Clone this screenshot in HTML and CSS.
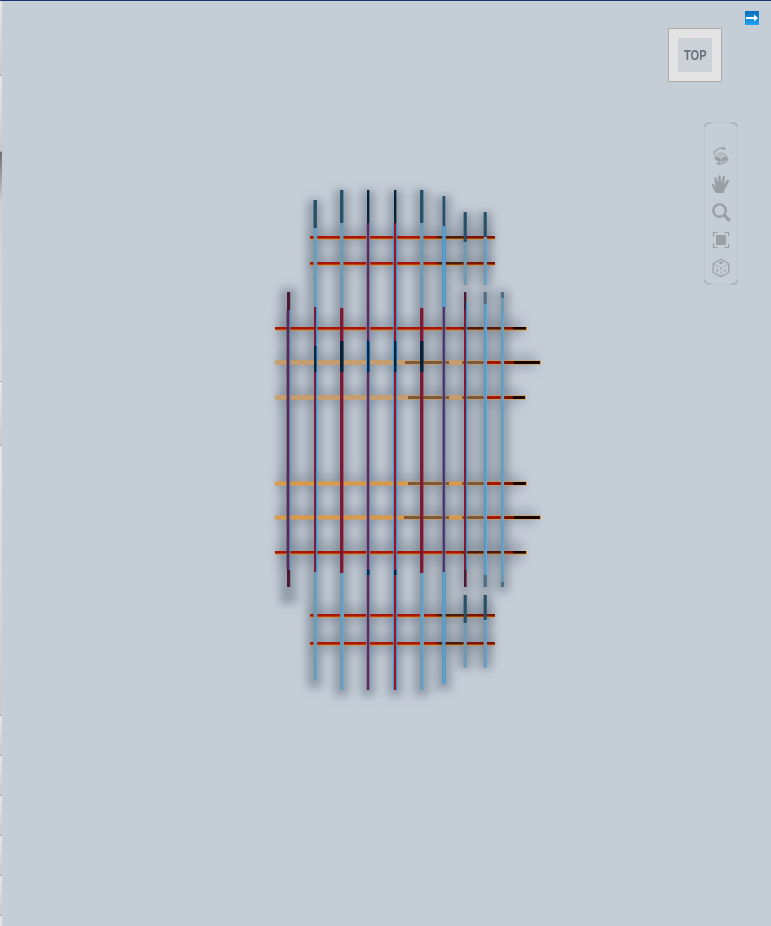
FILE: index.html
```html
<!DOCTYPE html>
<html lang="en">
<head>
<meta charset="utf-8">
<title>3D grid view</title>
<link rel="stylesheet" href="styles.css">
</head>
<body>
<main class="viewer">
  <div class="top-line"></div>
  <div class="rail">
    <i class="seg s75"></i><i class="seg s75"></i><i class="seg s230 dim"></i><i class="seg s65"></i><i class="seg s270"></i>
    <i class="seg s40"></i><i class="seg s40"></i><i class="seg s40"></i><i class="seg s40"></i><i class="seg s40"></i><i class="seg s45"></i>
  </div>

  <svg class="scene" viewBox="0 0 771 926" width="771" height="926" aria-hidden="true">
    <defs>
      <filter id="soft" x="-30%" y="-30%" width="160%" height="160%"><feGaussianBlur stdDeviation="4.6"/></filter>
      <filter id="softer" x="-30%" y="-30%" width="160%" height="160%"><feGaussianBlur stdDeviation="5.5"/></filter>
    </defs>

    <g class="shadow" filter="url(#soft)">
      <rect x="280" y="288" width="17" height="316"/>
      <rect x="307" y="200" width="15" height="488"/>
      <rect x="334" y="190" width="15" height="506"/>
      <rect x="361" y="190" width="14" height="506"/>
      <rect x="388" y="190" width="14" height="506"/>
      <rect x="414" y="190" width="15" height="506"/>
      <rect x="436" y="196" width="15" height="494"/>
      <rect x="458" y="212" width="14" height="74"/>
      <rect x="458" y="290" width="14" height="302"/>
      <rect x="458" y="595" width="14" height="74"/>
      <rect x="478" y="212" width="14" height="74"/>
      <rect x="478" y="290" width="14" height="302"/>
      <rect x="478" y="595" width="14" height="74"/>
      <rect x="496" y="290" width="13" height="302"/>
    </g>
    <g class="shadow faint" filter="url(#softer)">
      <rect x="312" y="229" width="180" height="16"/>
      <rect x="312" y="255" width="180" height="14"/>
      <rect x="278" y="319" width="245" height="18"/>
      <rect x="278" y="354" width="258" height="15"/>
      <rect x="278" y="389" width="245" height="15"/>
      <rect x="278" y="475" width="245" height="15"/>
      <rect x="278" y="509" width="258" height="15"/>
      <rect x="278" y="541" width="245" height="22"/>
      <rect x="312" y="606" width="180" height="18"/>
      <rect x="312" y="634" width="180" height="18"/>
    </g>

    <g class="beams-h">
      <g class="row-red">
        <rect class="fringe" x="310" y="236" width="185" height="3.4"/><rect class="red" x="310" y="236" width="127" height="2.6"/><rect class="brown" x="437" y="236" width="28" height="2.6"/><rect class="maroon" x="465" y="236" width="30" height="2.6"/>
        <rect class="fringe" x="310" y="262" width="185" height="3.4"/><rect class="red" x="310" y="262" width="127" height="2.6"/><rect class="brown" x="437" y="262" width="28" height="2.6"/><rect class="maroon" x="465" y="262" width="30" height="2.6"/>
        <rect class="fringe" x="275" y="327" width="252" height="3.4"/><rect class="red" x="275" y="327" width="187" height="2.6"/><rect class="brown" x="462" y="327" width="22" height="2.6"/><rect class="brown" x="486" y="327" width="15" height="2.6"/><rect class="maroon" x="504" y="327" width="9" height="2.6"/><rect class="black" x="513" y="327" width="13" height="2.6"/>
        <rect class="fringe" x="275" y="551" width="252" height="3.4"/><rect class="red" x="275" y="551" width="187" height="2.6"/><rect class="brown" x="462" y="551" width="22" height="2.6"/><rect class="brown" x="486" y="551" width="15" height="2.6"/><rect class="maroon" x="504" y="551" width="9" height="2.6"/><rect class="black" x="513" y="551" width="13" height="2.6"/>
        <rect class="fringe" x="310" y="614" width="185" height="3.4"/><rect class="red" x="310" y="614" width="127" height="2.6"/><rect class="brown" x="437" y="614" width="28" height="2.6"/><rect class="maroon" x="465" y="614" width="30" height="2.6"/>
        <rect class="fringe" x="310" y="642" width="185" height="3.4"/><rect class="red" x="310" y="642" width="127" height="2.6"/><rect class="brown" x="437" y="642" width="28" height="2.6"/><rect class="maroon" x="465" y="642" width="30" height="2.6"/>
      </g>
      <g class="row-tan">
        <rect class="edge" x="275" y="360.5" width="266" height="4"/><rect class="tan" x="275" y="361" width="130" height="3"/><rect class="umber" x="405" y="361" width="44" height="3"/><rect class="tan" x="449" y="361" width="13" height="3"/><rect class="umber" x="462" y="361" width="22" height="3"/><rect class="red" x="486" y="361" width="15" height="3"/><rect class="maroon" x="504" y="361" width="10" height="3"/><rect class="black" x="514" y="361" width="26" height="3"/>
        <rect class="edge" x="275" y="395.5" width="251" height="4"/><rect class="tan" x="275" y="396" width="133" height="3"/><rect class="umber" x="408" y="396" width="41" height="3"/><rect class="tan" x="449" y="396" width="13" height="3"/><rect class="umber" x="462" y="396" width="22" height="3"/><rect class="red" x="486" y="396" width="15" height="3"/><rect class="maroon" x="504" y="396" width="9" height="3"/><rect class="black" x="513" y="396" width="12" height="3"/>
      </g>
      <g class="row-gold">
        <rect class="edge" x="275" y="481.5" width="252" height="4"/><rect class="gold" x="275" y="482" width="133" height="3"/><rect class="umber" x="408" y="482" width="41" height="3"/><rect class="gold" x="449" y="482" width="13" height="3"/><rect class="umber" x="462" y="482" width="22" height="3"/><rect class="red" x="486" y="482" width="15" height="3"/><rect class="maroon" x="504" y="482" width="9" height="3"/><rect class="black" x="513" y="482" width="13" height="3"/>
        <rect class="edge" x="275" y="515.5" width="266" height="4"/><rect class="gold" x="275" y="516" width="129" height="3"/><rect class="umber" x="404" y="516" width="45" height="3"/><rect class="gold" x="449" y="516" width="13" height="3"/><rect class="umber" x="462" y="516" width="22" height="3"/><rect class="red" x="486" y="516" width="15" height="3"/><rect class="maroon" x="504" y="516" width="10" height="3"/><rect class="black" x="514" y="516" width="26" height="3"/>
      </g>
    </g>

    <g class="beams-v">
      <!-- x 287 -->
      <rect class="plum" x="287" y="292" width="3.2" height="18"/><rect class="crimson" x="287" y="310" width="2.6" height="277"/><rect class="blue" x="289.4" y="310" width="1" height="260"/><rect class="navy-edge" x="286.6" y="310" width=".8" height="260"/><rect class="plum" x="287" y="570" width="3.2" height="17"/>
      <!-- x 314 -->
      <rect class="teal" x="313.5" y="200" width="3.4" height="28"/><rect class="steel" x="313.5" y="228" width="3.4" height="79"/><rect class="sky" x="316.4" y="228" width=".8" height="79"/>
      <rect class="crimson" x="314" y="307" width="2.4" height="265"/><rect class="blue" x="316" y="307" width="1.2" height="265"/><rect class="navy" x="314" y="346" width="2.4" height="26"/>
      <rect class="steel" x="313.5" y="572" width="3.4" height="108"/><rect class="sky" x="316.4" y="572" width=".8" height="108"/>
      <!-- x 340 -->
      <rect class="teal" x="340" y="190" width="3.4" height="33"/><rect class="steel" x="340" y="223" width="3.4" height="85"/>
      <rect class="crimson" x="340" y="308" width="3.4" height="265"/><rect class="navy" x="340" y="341" width="3.4" height="31"/>
      <rect class="steel" x="340" y="573" width="3.4" height="117"/><rect class="sky" x="343" y="573" width=".8" height="117"/>
      <!-- x 367 -->
      <rect class="navy" x="367" y="190" width="2.4" height="33"/><rect class="blue" x="366.2" y="223" width=".9" height="467"/><rect class="red-v" x="367" y="223" width="2.4" height="467"/><rect class="blue" x="369.2" y="223" width="1" height="467"/><rect class="navy" x="367" y="341" width="2.4" height="31"/><rect class="navy" x="367" y="570" width="2.4" height="5"/>
      <!-- x 394 -->
      <rect class="navy" x="394" y="190" width="2.4" height="33"/><rect class="blue" x="393.2" y="223" width=".9" height="467"/><rect class="red-v" x="394" y="223" width="2.4" height="467"/><rect class="blue" x="396.2" y="223" width="1" height="467"/><rect class="navy" x="394" y="341" width="2.4" height="31"/><rect class="navy" x="394" y="570" width="2.4" height="5"/>
      <!-- x 420 -->
      <rect class="teal" x="420" y="190" width="3.4" height="33"/><rect class="steel" x="420" y="223" width="3.4" height="85"/>
      <rect class="crimson" x="420" y="308" width="3.4" height="265"/><rect class="navy" x="420" y="341" width="3.4" height="31"/>
      <rect class="steel" x="420" y="573" width="3.4" height="117"/><rect class="sky" x="423" y="573" width=".8" height="117"/>
      <!-- x 442 -->
      <rect class="teal" x="442.5" y="196" width="2.8" height="30"/><rect class="steel" x="442.5" y="226" width="2.8" height="81"/><rect class="blue" x="442" y="226" width=".8" height="458"/><rect class="blue" x="444.8" y="226" width=".8" height="458"/>
      <rect class="crimson" x="442.8" y="307" width="2" height="265"/><rect class="steel" x="442.8" y="572" width="2" height="112"/>
      <!-- x 464 -->
      <rect class="teal" x="463.6" y="212" width="3.2" height="30"/><rect class="steel" x="463.6" y="242" width="3.2" height="43"/>
      <rect class="plum" x="464" y="292" width="2.4" height="18"/><rect class="crimson" x="464" y="310" width="2.4" height="277"/><rect class="blue" x="466.2" y="302" width="1" height="268"/><rect class="plum" x="464" y="570" width="2.4" height="17"/>
      <rect class="teal" x="463.6" y="595" width="3.2" height="28"/><rect class="steel" x="463.6" y="623" width="3.2" height="45"/>
      <!-- x 484 -->
      <rect class="teal" x="483.6" y="212" width="3.2" height="25"/><rect class="steel" x="483.6" y="237" width="3.2" height="48"/><rect class="sky" x="486.2" y="237" width=".8" height="48"/>
      <rect class="slate" x="483.6" y="292" width="3.2" height="12"/><rect class="mid" x="483.6" y="304" width="2.6" height="283"/><rect class="sky" x="486" y="304" width="1" height="271"/><rect class="slate" x="483.6" y="575" width="3.2" height="12"/>
      <rect class="teal" x="483.6" y="595" width="3.2" height="25"/><rect class="steel" x="483.6" y="620" width="3.2" height="48"/><rect class="sky" x="486.2" y="620" width=".8" height="48"/>
      <!-- x 501 -->
      <rect class="slate" x="500.8" y="292" width="3.2" height="6"/><rect class="steel" x="500.8" y="298" width="3.2" height="289"/><rect class="sky" x="503.4" y="310" width=".7" height="265"/><rect class="slate" x="500.8" y="582" width="3.2" height="5"/>
    </g>
  </svg>

  <svg class="pin" viewBox="0 0 14 14" width="14" height="14" aria-hidden="true">
    <defs><linearGradient id="pinfill" x1="0" y1="0" x2="0" y2="1"><stop offset="0" stop-color="#0b6fb8"/><stop offset="1" stop-color="#1ca2f2"/></linearGradient></defs>
    <rect width="14" height="14" fill="url(#pinfill)"/>
    <path d="M1 6h8V3.5L13 7l-4 3.5V8H1z" fill="#fff"/>
  </svg>

  <div class="cube-face"><div class="cube-inner"><span class="cube-label">TOP</span></div></div>

  <nav class="tools" aria-label="View tools">
    <svg class="tool" viewBox="0 0 20 20" aria-hidden="true"><path class="ln" d="M2.8 8A7.8 7.8 0 0 1 12.5 2.4M17.2 12A7.8 7.8 0 0 1 7.5 17.6"/><path class="fl" d="M12 .4l3.2 2.4-3.8 1.4zM8 19.6l-3.2-2.4 3.8-1.4z"/><path class="fl pale" d="M3.8 8.4L10 5.4l6.2 3L10 11.2z"/><path class="fl" d="M3.8 9.4L9.7 12.2V16.4L3.8 13.4zM10.3 12.2L16.2 9.4V13.4L10.3 16.4z"/></svg>
    <svg class="tool" viewBox="0 0 20 20" aria-hidden="true"><path class="fl" d="M4.6 19L.9 11.6c-.6-1.4 1.2-2.3 2.1-1.1l1.9 2.3L3.3 4.6c-.2-1.6 2-2 2.3-.4L7.1 9.6 7.3 2.4c0-1.7 2.3-1.7 2.4 0l.5 7 1.5-6.3c.4-1.6 2.5-1.1 2.2.5l-1 6.8 3-4.1c1-1.3 2.8 0 2 1.4L13.8 15c-.5.9-.8 2.5-.8 4z"/></svg>
    <svg class="tool" viewBox="0 0 20 20" aria-hidden="true"><circle class="ln thick" cx="8.6" cy="8.6" r="6.2"/><path class="ln thicker" d="M13.4 13.4l4.3 4.3"/></svg>
    <svg class="tool" viewBox="0 0 20 20" aria-hidden="true"><path class="ln" d="M2.5 6.5V2.5H6.5M13.5 2.5H17.5V6.5M17.5 13.5V17.5H13.5M6.5 17.5H2.5V13.5"/><rect class="fl" x="5" y="5" width="10" height="10"/></svg>
    <svg class="tool" viewBox="0 0 20 20" aria-hidden="true"><path class="ln" d="M10 1.2L17.8 5.6V14.4L10 18.8 2.2 14.4V5.6z"/><path class="ln dash" d="M2.8 6L10 10 17.2 6M10 10V18.2"/><path class="fl" d="M10 3.2l2.6 1.5L10 6.2 7.4 4.7zM4.4 12.2l2.6-1v2.8zM15.6 12.2l-2.6-1v2.8z"/></svg>
  </nav>
</main>
</body>
</html>
```
FILE: styles.css
```css
html, body { margin: 0; padding: 0; }
body { background: #c5cdd7; font-family: "Liberation Sans", Arial, sans-serif; overflow: hidden; }

.viewer { position: relative; width: 771px; height: 926px; background: #c5cdd7; overflow: hidden; }
.top-line { position: absolute; left: 0; top: 0; right: 0; height: 1px; background: #17396f; z-index: 3; }

.rail { position: absolute; left: 0; top: 0; width: 2px; height: 926px; display: flex; flex-direction: column; z-index: 2; }
.seg { display: block; flex: none; background: linear-gradient(#e6e6e6, #c9c9c9); border-bottom: 1px solid #a9a9a9; box-sizing: border-box; }
.seg.dim { background: linear-gradient(#6f6f6f, #cfcfcf 22%, #dcdcdc); }
.s75 { height: 76px; }
.s230 { height: 230px; }
.s65 { height: 64px; }
.s270 { height: 270px; }
.s40 { height: 40px; }
.s45 { height: 50px; }

.scene { position: absolute; left: 0; top: 0; display: block; }
.shadow rect { fill: #6d7886; fill-opacity: .58; }
.shadow.faint rect { fill-opacity: .4; }

.fringe { fill: #e8890c; }
.edge { fill: #e59a35; }
.red { fill: #a81500; }
.brown { fill: #4f1a06; }
.maroon { fill: #7d1200; }
.black { fill: #140500; }
.tan { fill: #c89c6c; }
.gold { fill: #d9994a; }
.umber { fill: #7b5a3c; }

.plum { fill: #4b1b33; }
.crimson { fill: #7f1a35; }
.red-v { fill: #a0121c; }
.blue { fill: #2a9cf0; }
.sky { fill: #5aaee6; }
.teal { fill: #27506a; }
.steel { fill: #6f9ab4; }
.slate { fill: #4f6e84; }
.mid { fill: #5e98c0; }
.navy { fill: #06233c; }
.navy-edge { fill: #26406a; }

.pin { position: absolute; left: 745px; top: 11px; display: block; }

.cube-face { position: absolute; left: 668px; top: 28px; width: 54px; height: 54px; box-sizing: border-box; border: 1px solid #aaaaaa; background: #e3e3e3; display: flex; align-items: center; justify-content: center; }
.cube-inner { width: 34px; height: 34px; background: #cdd2d9; display: flex; align-items: center; justify-content: center; }
.cube-label { display: block; color: #6b717c; font-weight: 700; font-size: 15px; line-height: 34px; transform: scaleX(.74); }

.tools { position: absolute; left: 704px; top: 122px; width: 34px; height: 163px; box-sizing: border-box; padding-top: 23px; display: flex; flex-direction: column; align-items: center; gap: 8px; border: 1px solid #bcc4ce; border-radius: 5px; }
.tools::before, .tools::after { content: ""; position: absolute; left: -1px; right: -1px; height: 5px; border: 2px solid #adb5bf; box-sizing: border-box; clip-path: polygon(0 0, 7px 0, 7px 100%, calc(100% - 7px) 100%, calc(100% - 7px) 0, 100% 0, 100% 100%, 0 100%); }
.tools::before { top: -1px; border-bottom: 0; border-radius: 5px 5px 0 0; }
.tools::after { bottom: -1px; border-top: 0; border-radius: 0 0 5px 5px; }
.tool { width: 20px; height: 20px; display: block; flex: none; filter: blur(.3px); }
.fl { fill: #9a9fa6; }
.fl.pale { fill: #b4b9c0; }
.ln { fill: none; stroke: #9a9fa6; stroke-width: 1.2; }
.ln.thick { stroke-width: 2.4; }
.ln.thicker { stroke-width: 3.4; stroke-linecap: round; }
.ln.dash { stroke-dasharray: 2 1.4; stroke-width: 1; }
```
